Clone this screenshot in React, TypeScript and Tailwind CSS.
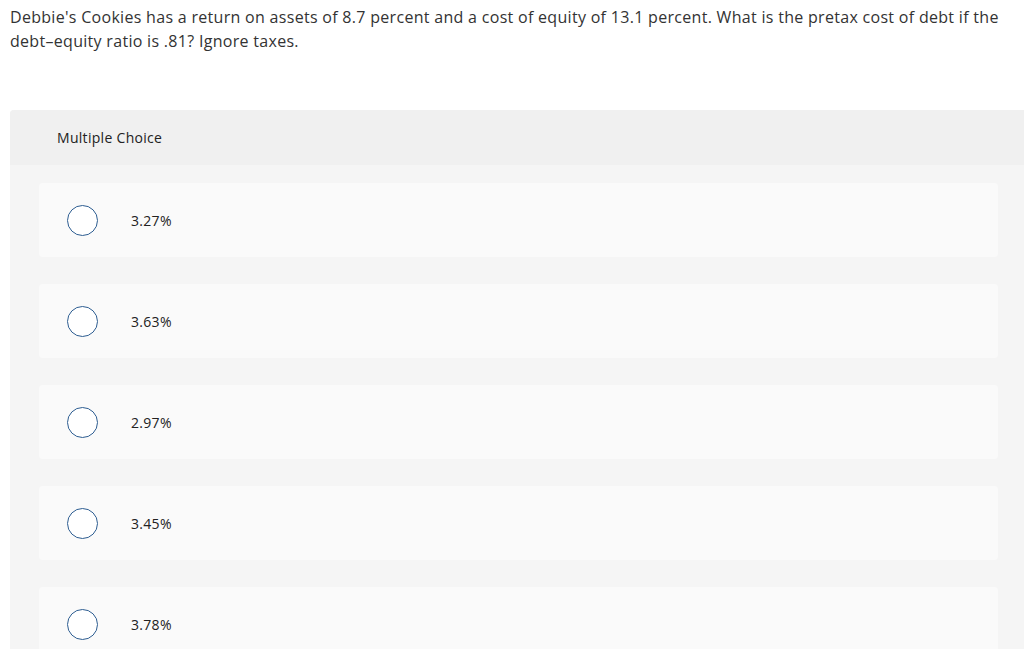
const choices = ['3.27%', '3.63%', '2.97%', '3.45%', '3.78%'];

export default function App() {
  return (
    <div className="min-h-[649px] bg-white text-[#333] font-['Open_Sans','Noto_Sans',sans-serif] tracking-[0.3px] overflow-hidden">
      <p className="pl-[10px] pr-[20px] pt-[5px] text-[16px] leading-[24px]">
        Debbie's Cookies has a return on assets of 8.7 percent and a cost of equity of 13.1 percent. What is the pretax cost of
        debt if the debt–equity ratio is .81? Ignore taxes.
      </p>

      <div className="ml-[10px] mt-[57px] rounded-tl-[4px] bg-[#f5f5f5]">
        {/* Header */}
        <div className="h-[55px] flex items-center pl-[47px] bg-[#f0f0f0] rounded-tl-[4px] text-[14px] text-[#222]">
          Multiple Choice
        </div>

        {/* Choices */}
        <div className="pl-[29px] pr-[26px] pt-[18px] pb-[20px] flex flex-col gap-[27px]">
          {choices.map((c) => (
            <label key={c} className="h-[74px] flex items-center bg-[#fafafa] rounded-[4px] cursor-pointer">
              <span className="ml-[28px] w-[31px] h-[31px] rounded-full border-[1.5px] border-[#2d5d91] bg-white flex-shrink-0" />
              <span className="ml-[33px] text-[14px] text-[#222]">{c}</span>
            </label>
          ))}
        </div>
      </div>
    </div>
  );
}
